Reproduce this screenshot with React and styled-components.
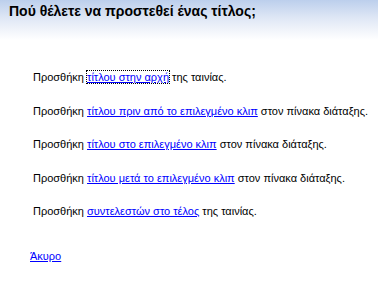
import React from 'react'
import styled, { createGlobalStyle } from 'styled-components'

const GlobalStyle = createGlobalStyle`
  html, body {
    margin: 0;
    padding: 0;
    background: #fff;
  }
  body {
    font-family: Tahoma, "DejaVu Sans", "Liberation Sans", sans-serif;
  }
`

const Page = styled.div`
  width: 378px;
  height: 297px;
  display: flex;
  flex-direction: column;
  background: #fff;
  overflow: hidden;
`

const Header = styled.div`
  height: 40px;
  padding: 3px 0 0 9px;
  box-sizing: border-box;
  background: linear-gradient(to bottom, #bccfec 0%, #dfe7f5 45%, #ffffff 100%);
`

const Title = styled.h1`
  margin: 0;
  font-family: "Liberation Sans", Arial, sans-serif;
  font-size: 14px;
  font-weight: bold;
  color: #000;
`

const Options = styled.div`
  display: flex;
  flex-direction: column;
  gap: 19.5px;
  padding: 30px 0 0 33px;
`

const Row = styled.div`
  font-family: "Liberation Sans", Arial, sans-serif;
  font-size: 11px;
  line-height: 14px;
  color: #000;
  white-space: nowrap;
`

const Link = styled.a`
  color: #0000ff;
  text-decoration: underline;
  cursor: pointer;
  outline: ${(props) => (props.$focused ? '1px dotted #000' : 'none')};
`

const Cancel = styled(Row)`
  margin-top: 31px;
  padding-left: 30px;
`

const options = [
  { link: 'τίτλου στην αρχή', rest: ' της ταινίας.', focused: true },
  { link: 'τίτλου πριν από το επιλεγμένο κλιπ', rest: ' στον πίνακα διάταξης.' },
  { link: 'τίτλου στο επιλεγμένο κλιπ', rest: ' στον πίνακα διάταξης.' },
  { link: 'τίτλου μετά το επιλεγμένο κλιπ', rest: ' στον πίνακα διάταξης.' },
  { link: 'συντελεστών στο τέλος', rest: ' της ταινίας.' },
]

const App = () => {
  return (
    <Page>
      <GlobalStyle />
      <Header>
        <Title>Πού θέλετε να προστεθεί ένας τίτλος;</Title>
      </Header>
      <Options>
        {options.map((o) => (
          <Row key={o.link}>
            Προσθήκη <Link $focused={o.focused}>{o.link}</Link>
            {o.rest}
          </Row>
        ))}
      </Options>
      <Cancel>
        <Link>Άκυρο</Link>
      </Cancel>
    </Page>
  )
}

export default App
